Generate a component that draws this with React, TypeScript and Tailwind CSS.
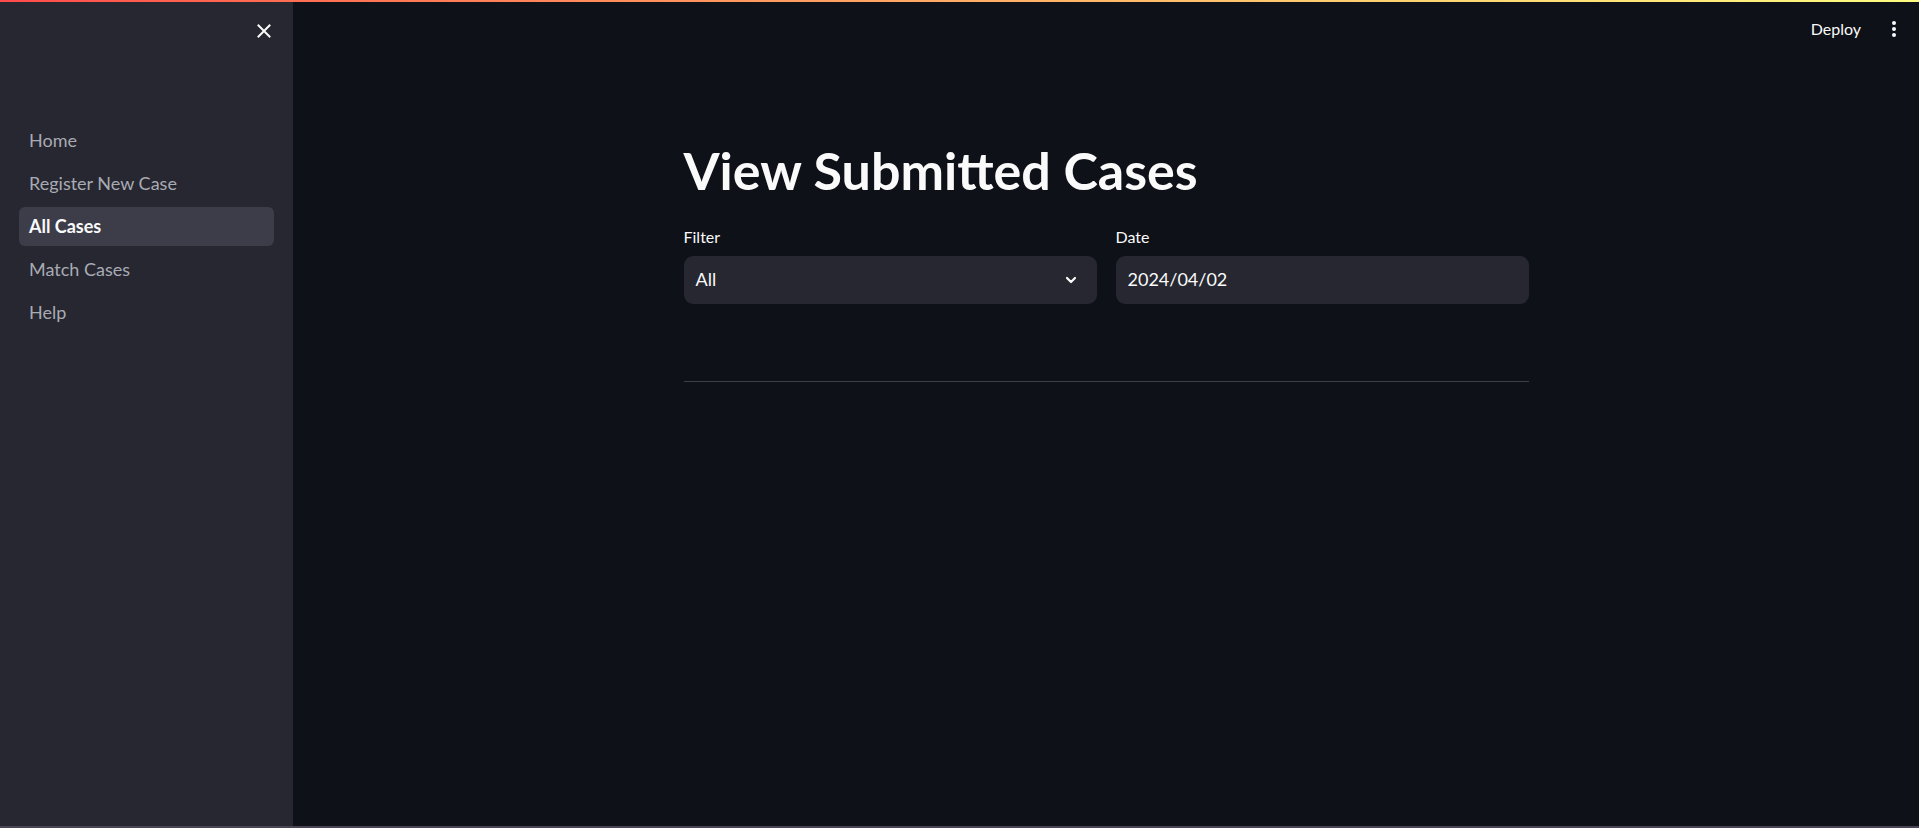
const navItems = ['Home', 'Register New Case', 'All Cases', 'Match Cases', 'Help'];

const font = { fontFamily: 'Lato, "Noto Sans", sans-serif' };

const Sidebar = () => {
  return (
    <aside className="w-[293px] shrink-0 bg-[#262730] flex flex-col">
      <div className="flex justify-end pr-[22px] pt-[22px]">
        <button className="w-[14px] h-[14px] text-[#fafafa]">
          <svg viewBox="0 0 14 14" width="14" height="14" fill="none" stroke="currentColor" strokeWidth="2" strokeLinecap="square">
            <path d="M1.5 1.5 L12.5 12.5 M12.5 1.5 L1.5 12.5" />
          </svg>
        </button>
      </div>
      <nav className="mt-[83px] px-[19px] flex flex-col gap-[4px]">
        {navItems.map((item) => (
          <a
            key={item}
            className={
              item === 'All Cases'
                ? 'h-[39px] flex items-center px-[10px] rounded-[6px] bg-[#3c3d49] text-[#fafafa] font-bold text-[18px]'
                : 'h-[39px] flex items-center px-[10px] rounded-[6px] text-[#a9abb4] text-[18px]'
            }
          >
            {item}
          </a>
        ))}
      </nav>
    </aside>
  );
};

const Header = () => {
  return (
    <div className="h-[54px] flex items-center justify-end pr-[23px] gap-[31px]">
      <span className="text-[16px] text-[#fafafa]">Deploy</span>
      <div className="flex flex-col gap-[2px]">
        <span className="w-[4px] h-[4px] rounded-full bg-[#fafafa]" />
        <span className="w-[4px] h-[4px] rounded-full bg-[#fafafa]" />
        <span className="w-[4px] h-[4px] rounded-full bg-[#fafafa]" />
      </div>
    </div>
  );
};

const Field = ({ label, children }: { label: string; children: React.ReactNode }) => (
  <div className="flex-1 flex flex-col">
    <label className="text-[16px] leading-[1.4] text-[#fafafa]">{label}</label>
    <div className="mt-[7px] h-[48px] rounded-[9px] bg-[#262730] flex items-center px-[12px] text-[18px] text-[#fafafa]">
      {children}
    </div>
  </div>
);

export default function App() {
  return (
    <div className="h-screen flex flex-col bg-[#0e1117] overflow-hidden" style={font}>
      <div className="h-[2px] shrink-0 bg-gradient-to-r from-[#ff4b4b] to-[#fffd80]" />
      <div className="flex-1 flex min-h-0">
        <Sidebar />
        <main className="flex-1 flex flex-col">
          <Header />
          <div className="w-[845px] mx-auto pt-[83px]">
            <h1 className="text-[52px] leading-[1.2] font-bold text-[#fafafa]">View Submitted Cases</h1>
            <div className="mt-[25px] flex gap-[19px]">
              <Field label="Filter">
                <span className="flex-1">All</span>
                <svg width="12" height="8" viewBox="0 0 12 8" fill="none" stroke="#fafafa" strokeWidth="2.2" strokeLinecap="round" strokeLinejoin="round" className="mr-[8px]">
                  <path d="M2 2 L6 6 L10 2" />
                </svg>
              </Field>
              <Field label="Date">
                <span>2024/04/02</span>
              </Field>
            </div>
            <div className="mt-[77px] h-px bg-[#3d3f48]" />
          </div>
        </main>
      </div>
      <div className="h-[2px] shrink-0 bg-[#4a4453]" />
    </div>
  );
}
